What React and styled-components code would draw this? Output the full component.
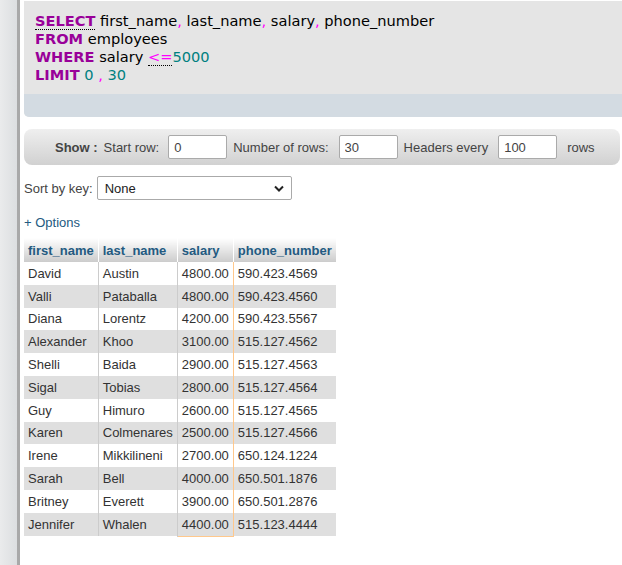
import React from "react";
import styled, { createGlobalStyle } from "styled-components";

const GlobalStyle = createGlobalStyle`
  html, body {
    margin: 0;
    padding: 0;
    background: #fff;
    font-family: "Liberation Sans", Arial, sans-serif;
    font-size: 13px;
    color: #444;
  }
`;

const Page = styled.div`
  display: flex;
  min-height: 565px;
  width: 622px;
  overflow: hidden;
`;

const Sidebar = styled.div`
  width: 17px;
  flex-shrink: 0;
  background: linear-gradient(to right, #eaebec, #dcdee0);
  border-right: 3px solid #a9a9a9;
`;

const Main = styled.div`
  flex: 1;
  padding: 1px 0 0 4px;
  min-width: 0;
`;

const SqlBox = styled.div`
  width: 610px;
  background: #e5e5e5;
  border-bottom-left-radius: 5px;
  overflow: hidden;
`;

const SqlCode = styled.div`
  padding: 11px 11px 9px;
  height: 73px;
  font-family: "DejaVu Sans", Verdana, sans-serif;
  font-size: 14.6px;
  line-height: 18px;
  color: #000;
`;

const Keyword = styled.span`
  color: #990099;
  font-weight: bold;
  border-bottom: ${(p) => (p.$dotted ? "1px dotted #000" : "none")};
`;

const Punct = styled.span`
  color: #ff00ff;
  border-bottom: ${(p) => (p.$dotted ? "1px dotted #000" : "none")};
`;

const Num = styled.span`
  color: #008080;
`;

const SqlFooter = styled.div`
  height: 23px;
  background: #d3dbe2;
`;

const ShowBar = styled.div`
  margin-top: 12px;
  width: 596px;
  height: 36px;
  border-radius: 8px;
  background: linear-gradient(#efefef, #d1d1d1);
  display: flex;
  align-items: center;
  padding-left: 31px;
  box-sizing: border-box;
`;

const Label = styled.span`
  color: #444;
  margin-right: ${(p) => p.$gap ?? 10}px;
  margin-left: ${(p) => p.$lead ?? 0}px;
  font-weight: ${(p) => (p.$bold ? "bold" : "normal")};
`;

const NumInput = styled.input`
  width: 59px;
  height: 24px;
  box-sizing: border-box;
  border: 1px solid #aaa;
  border-radius: 2px;
  background: #fff;
  font-family: "Liberation Sans", Arial, sans-serif;
  font-size: 13px;
  color: #444;
  padding: 0 5px;
  margin-right: 6px;
  outline: none;
`;

const SortRow = styled.div`
  margin-top: 11px;
  display: flex;
  align-items: center;
  gap: 4px;
`;

const SortSelect = styled.div`
  width: 195px;
  height: 24px;
  box-sizing: border-box;
  border: 1px solid #aaa;
  border-radius: 2px;
  background: #fff;
  display: flex;
  align-items: center;
  justify-content: space-between;
  padding: 0 7px;
  color: #222;
  font-size: 13px;
`;

const OptionsLink = styled.div`
  margin-top: 15px;
  color: #235a81;
  font-size: 13px;
  line-height: 16px;
`;

const Table = styled.table`
  margin-top: 7px;
  border-collapse: collapse;
  font-size: 13px;
`;

const Th = styled.th`
  background: linear-gradient(#fff, #cccccc);
  color: #235a81;
  font-weight: bold;
  text-align: left;
  height: 24px;
  padding: 0 4px;
  border-right: 1px solid #fff;
  white-space: nowrap;
`;

const Tr = styled.tr`
  background: ${(p) => (p.$even ? "#dfdfdf" : "#fff")};
`;

const Td = styled.td`
  height: 22.8px;
  padding: 0 4px;
  color: #333;
  white-space: nowrap;
  text-align: ${(p) => (p.$right ? "right" : "left")};
  border-left: 1px solid #ccc;
  border-right: 1px solid ${(p) => (p.$marked ? "#ffc88c" : "#ccc")};
  border-bottom: ${(p) => (p.$marked && p.$last ? "1px solid #ffc88c" : "none")};
  &:first-child {
    border-left: none;
  }
  &:last-child {
    border-right: none;
  }
`;

const rows = [
  ["David", "Austin", "4800.00", "590.423.4569"],
  ["Valli", "Pataballa", "4800.00", "590.423.4560"],
  ["Diana", "Lorentz", "4200.00", "590.423.5567"],
  ["Alexander", "Khoo", "3100.00", "515.127.4562"],
  ["Shelli", "Baida", "2900.00", "515.127.4563"],
  ["Sigal", "Tobias", "2800.00", "515.127.4564"],
  ["Guy", "Himuro", "2600.00", "515.127.4565"],
  ["Karen", "Colmenares", "2500.00", "515.127.4566"],
  ["Irene", "Mikkilineni", "2700.00", "650.124.1224"],
  ["Sarah", "Bell", "4000.00", "650.501.1876"],
  ["Britney", "Everett", "3900.00", "650.501.2876"],
  ["Jennifer", "Whalen", "4400.00", "515.123.4444"],
];

const Chevron = () => (
  <svg width="10" height="7" viewBox="0 0 10 7">
    <path d="M1 1.5 L5 5.5 L9 1.5" fill="none" stroke="#222" strokeWidth="2" />
  </svg>
);

export default function App() {
  return (
    <>
      <GlobalStyle />
      <Page>
        <Sidebar />
        <Main>
          <SqlBox>
            <SqlCode>
              <div>
                <Keyword $dotted>SELECT</Keyword> first_name<Punct>,</Punct> last_name<Punct>,</Punct>{" "}
                salary<Punct>,</Punct> phone_number
              </div>
              <div>
                <Keyword>FROM</Keyword> employees
              </div>
              <div>
                <Keyword>WHERE</Keyword> salary <Punct $dotted>&lt;=</Punct>
                <Num>5000</Num>
              </div>
              <div>
                <Keyword>LIMIT</Keyword> <Num>0</Num> <Punct>,</Punct> <Num>30</Num>
              </div>
            </SqlCode>
            <SqlFooter />
          </SqlBox>

          <ShowBar>
            <Label $bold $gap={6}>Show :</Label>
            <Label $gap={9}>Start row:</Label>
            <NumInput defaultValue="0" />
            <Label>Number of rows:</Label>
            <NumInput defaultValue="30" />
            <Label>Headers every</Label>
            <NumInput defaultValue="100" />
            <Label $gap={0} $lead={4}>rows</Label>
          </ShowBar>

          <SortRow>
            <span>Sort by key:</span>
            <SortSelect>
              <span>None</span>
              <Chevron />
            </SortSelect>
          </SortRow>

          <OptionsLink>+ Options</OptionsLink>

          <Table>
            <thead>
              <tr>
                <Th>first_name</Th>
                <Th>last_name</Th>
                <Th>salary</Th>
                <Th>phone_number</Th>
              </tr>
            </thead>
            <tbody>
              {rows.map((r, i) => (
                <Tr key={r[0]} $even={i % 2 === 1}>
                  <Td>{r[0]}</Td>
                  <Td>{r[1]}</Td>
                  <Td $right $marked $last={i === rows.length - 1}>
                    {r[2]}
                  </Td>
                  <Td>{r[3]}</Td>
                </Tr>
              ))}
            </tbody>
          </Table>
        </Main>
      </Page>
    </>
  );
}
